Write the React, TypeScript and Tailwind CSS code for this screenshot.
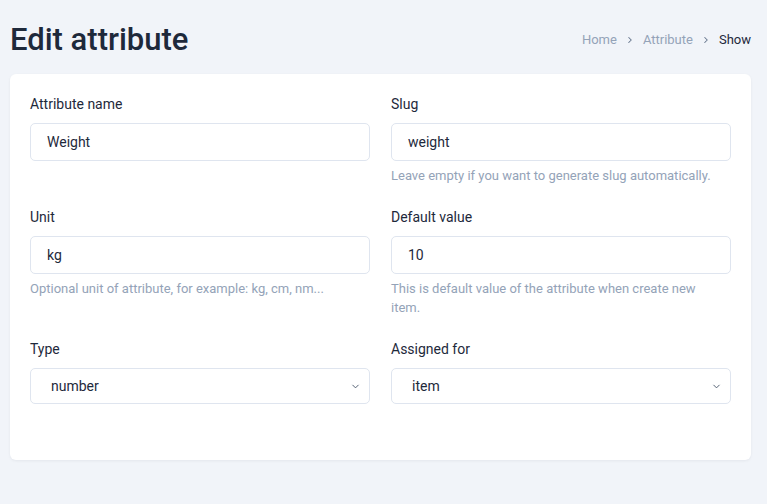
import { ChevronDown, ChevronRight } from "lucide-react";

function Field({
  label,
  value,
  help,
  select,
}: {
  label: string;
  value: string;
  help?: React.ReactNode;
  select?: boolean;
}) {
  return (
    <div className="flex flex-col">
      <label className="h-5 text-[14px] leading-5 text-[#1e293b]">{label}</label>
      {select ? (
        <div className="relative mt-[9px] h-[36px] rounded-[5px] border border-[#dfe5ef] bg-white pl-[20px] text-[14px] leading-[34px] text-[#1e293b]">
          {value}
          <ChevronDown className="absolute right-[8px] top-[12px] size-[11px] text-[#475569]" strokeWidth={2} />
        </div>
      ) : (
        <div className="mt-[9px] h-[38px] rounded-[5px] border border-[#dfe5ef] bg-white pl-[16px] text-[14px] leading-[36px] text-[#1e293b]">
          {value}
        </div>
      )}
      {help && (
        <p className="mt-[5px] max-w-[325px] text-[13px] leading-[19px] text-[#94a3b8]">{help}</p>
      )}
    </div>
  );
}

export default function App() {
  return (
    <div
      className="min-h-[504px] bg-[#f1f4f9] pl-[10px] pr-[16px] pt-[20px] pb-[46px]"
      style={{ fontFamily: "Roboto, 'Liberation Sans', sans-serif" }}
    >
      {/* Header */}
      <div className="flex h-[40px] items-center justify-between">
        <h1 className="text-[31px] font-medium text-[#1e293b]">Edit attribute</h1>
        <nav className="flex items-center gap-[8px] text-[13px] text-[#94a3b8]">
          <span>Home</span>
          <ChevronRight className="size-[10px] text-[#64748b]" strokeWidth={2.5} />
          <span>Attribute</span>
          <ChevronRight className="size-[10px] text-[#64748b]" strokeWidth={2.5} />
          <span className="text-[#1e293b]">Show</span>
        </nav>
      </div>

      {/* Card */}
      <div className="mt-[14px] rounded-[6px] bg-white px-[20px] pt-[20px] pb-[56px] shadow-[0_1px_3px_rgba(15,23,42,0.06)]">
        <div className="grid grid-cols-2 gap-x-[21px] gap-y-[22px] items-start">
          <Field label="Attribute name" value="Weight" />
          <Field
            label="Slug"
            value="weight"
            help="Leave empty if you want to generate slug automatically."
          />
          <Field
            label="Unit"
            value="kg"
            help="Optional unit of attribute, for example: kg, cm, nm..."
          />
          <Field
            label="Default value"
            value="10"
            help="This is default value of the attribute when create new item."
          />
          <Field label="Type" value="number" select />
          <Field label="Assigned for" value="item" select />
        </div>
      </div>
    </div>
  );
}
